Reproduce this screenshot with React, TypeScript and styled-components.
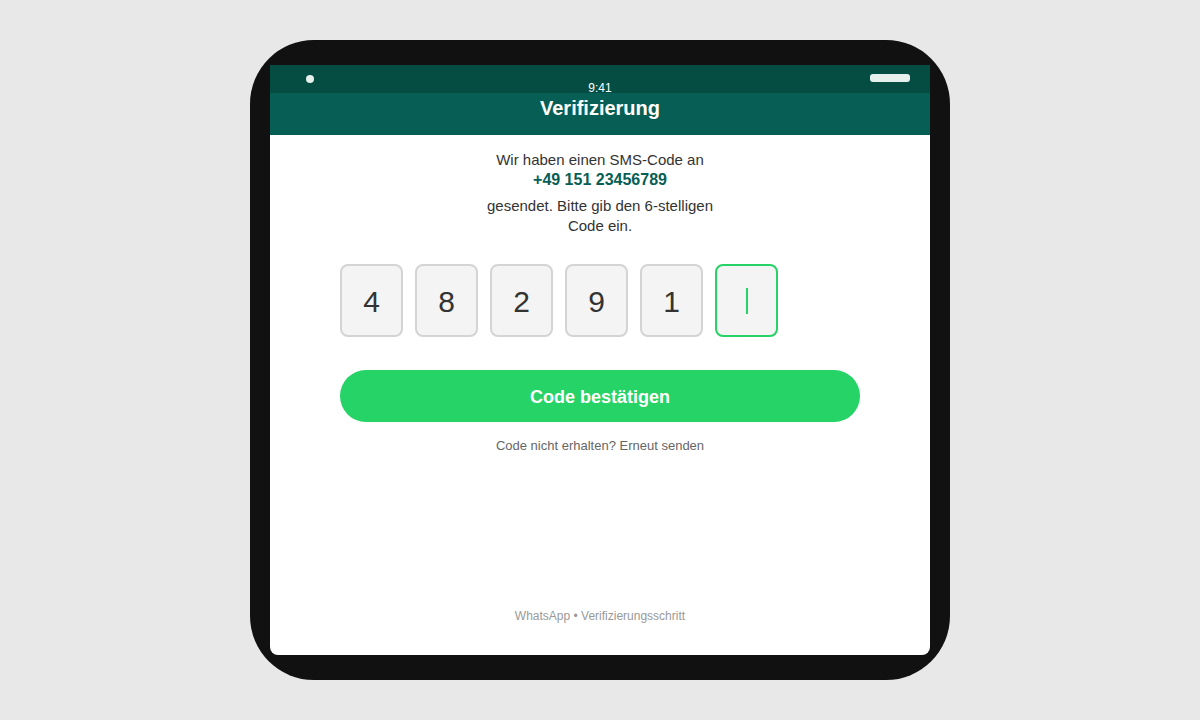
import React from 'react'
import styled, { createGlobalStyle } from 'styled-components'

const GlobalStyle = createGlobalStyle`
  html, body {
    margin: 0;
    padding: 0;
    background: #e8e8e8;
    font-family: "Liberation Sans", Arial, sans-serif;
  }
  * {
    box-sizing: border-box;
  }
`

const digits = ['4', '8', '2', '9', '1', '']

function App() {
  return (
    <>
      <GlobalStyle />
      <Page>
        <Device>
          <Screen>
            <StatusBar>
              <Camera />
              <Time>9:41</Time>
              <Speaker />
            </StatusBar>
            <Header>Verifizierung</Header>
            <Content>
              <Message>
                Wir haben einen SMS-Code an
                <Phone>+49 151 23456789</Phone>
                <Rest>gesendet. Bitte gib den 6-stelligen Code ein.</Rest>
              </Message>
              <CodeRow>
                {digits.map((d, i) => (
                  <CodeBox key={i} $active={d === ''}>
                    {d === '' ? <Caret /> : d}
                  </CodeBox>
                ))}
              </CodeRow>
              <ConfirmButton>Code bestätigen</ConfirmButton>
              <Resend>Code nicht erhalten? Erneut senden</Resend>
            </Content>
            <Footer>WhatsApp • Verifizierungsschritt</Footer>
          </Screen>
        </Device>
      </Page>
    </>
  )
}

export default App

const Page = styled.div`
  width: 100%;
  height: 100vh;
  display: flex;
  align-items: center;
  justify-content: center;
`

const Device = styled.div`
  width: 700px;
  height: 640px;
  background: #111111;
  border-radius: 64px;
  padding: 25px 20px;
  display: flex;
`

const Screen = styled.div`
  flex: 1;
  background: #ffffff;
  border-radius: 0 0 8px 8px;
  overflow: hidden;
  display: flex;
  flex-direction: column;
`

const StatusBar = styled.div`
  height: 28px;
  background: #054d43;
  display: grid;
  grid-template-columns: 1fr auto 1fr;
  align-items: center;
  padding: 0 20px;
`

const Camera = styled.span`
  width: 8px;
  height: 8px;
  border-radius: 50%;
  background: #e8f0ee;
  justify-self: start;
  margin-left: 16px;
`

const Time = styled.span`
  align-self: end;
  color: #ffffff;
  font-size: 12px;
  line-height: 14px;
  margin-bottom: -2px;
`

const Speaker = styled.span`
  justify-self: end;
  width: 40px;
  height: 8px;
  border-radius: 3px;
  background: #e8f0ee;
  margin-top: -2px;
`

const Header = styled.div`
  height: 42px;
  background: #075e54;
  color: #ffffff;
  font-size: 20px;
  font-weight: 700;
  line-height: 24px;
  padding-top: 3px;
  text-align: center;
`

const Content = styled.div`
  flex: 1;
  width: 520px;
  margin: 0 auto;
  padding-top: 15px;
  display: flex;
  flex-direction: column;
  align-items: center;
`

const Message = styled.div`
  max-width: 240px;
  text-align: center;
  color: #333333;
  font-size: 15px;
  line-height: 19px;
`

const Phone = styled.strong`
  display: block;
  color: #075e54;
  font-size: 16px;
  line-height: 17px;
  margin: 2px 0 8px;
`

const Rest = styled.span`
  display: block;
  line-height: 20px;
`

const CodeRow = styled.div`
  align-self: stretch;
  display: flex;
  gap: 12px;
  margin-top: 28px;
`

const CodeBox = styled.div<{ $active?: boolean }>`
  width: 63px;
  height: 73px;
  border-radius: 8px;
  border: 2px solid ${p => (p.$active ? '#25d366' : '#d4d4d4')};
  background: #f4f4f4;
  display: flex;
  align-items: center;
  justify-content: center;
  padding-top: 3px;
  color: #333333;
  font-size: 30px;
`

const Caret = styled.span`
  width: 2px;
  height: 26px;
  margin-top: -3px;
  background: #25d366;
`

const ConfirmButton = styled.button`
  align-self: stretch;
  margin-top: 33px;
  height: 52px;
  border: none;
  border-radius: 26px;
  background: #25d366;
  color: #ffffff;
  font-family: inherit;
  font-size: 18px;
  font-weight: 700;
  padding: 3px 0 0;
  cursor: pointer;
`

const Resend = styled.div`
  margin-top: 16px;
  color: #666666;
  font-size: 13px;
  line-height: 16px;
`

const Footer = styled.div`
  text-align: center;
  color: #999999;
  font-size: 12px;
  line-height: 14px;
  padding-bottom: 32px;
`
